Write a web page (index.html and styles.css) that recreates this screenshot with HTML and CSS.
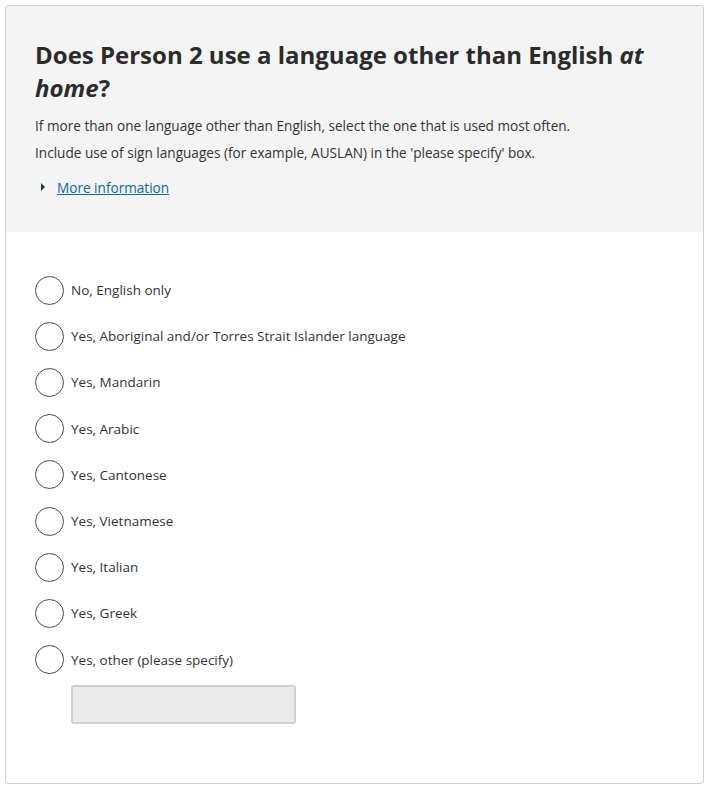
FILE: index.html
```html
<!DOCTYPE html>
<html>
<head>
<meta charset="utf-8">
<link rel="stylesheet" href="styles.css">
</head>
<body>
<div class="card">
  <div class="header">
    <h1 class="title">Does Person 2 use a language other than English <em>at home</em>?</h1>
    <p class="hint">If more than one language other than English, select the one that is used most often.</p>
    <p class="hint">Include use of sign languages (for example, AUSLAN) in the 'please specify' box.</p>
    <div class="more"><span class="tri"></span><a href="#" class="link">More information</a></div>
  </div>
  <div class="options">
    <label class="opt"><span class="radio"></span><span class="lbl">No, English only</span></label>
    <label class="opt"><span class="radio"></span><span class="lbl">Yes, Aboriginal and/or Torres Strait Islander language</span></label>
    <label class="opt"><span class="radio"></span><span class="lbl">Yes, Mandarin</span></label>
    <label class="opt"><span class="radio"></span><span class="lbl">Yes, Arabic</span></label>
    <label class="opt"><span class="radio"></span><span class="lbl">Yes, Cantonese</span></label>
    <label class="opt"><span class="radio"></span><span class="lbl">Yes, Vietnamese</span></label>
    <label class="opt"><span class="radio"></span><span class="lbl">Yes, Italian</span></label>
    <label class="opt"><span class="radio"></span><span class="lbl">Yes, Greek</span></label>
    <label class="opt"><span class="radio"></span><span class="lbl">Yes, other (please specify)</span></label>
    <div class="specify"><div class="input"></div></div>
  </div>
</div>
</body>
</html>
```
FILE: styles.css
```css
* { box-sizing: border-box; }
body {
  margin: 0;
  padding: 5px 5px 0 5px;
  background: #fff;
  font-family: "Open Sans", "Noto Sans", sans-serif;
  color: #333;
}
.card {
  width: 699px;
  height: 779px;
  border: 1px solid #cfcfcf;
  border-radius: 3px;
  overflow: hidden;
}
.header {
  background: #f4f4f4;
  height: 226px;
  padding: 32px 30px 0 29px;
}
.title {
  margin: 0 0 8px 0;
  font-size: 24px;
  line-height: 33px;
  font-weight: 700;
  color: #2b2b2b;
}
.title em { font-style: italic; }
.hint {
  margin: 0;
  font-size: 13.6px;
  line-height: 27px;
  color: #333;
}
.more {
  display: flex;
  align-items: center;
  margin-top: 11px;
  padding-left: 6px;
  height: 20px;
}
.tri {
  width: 0; height: 0;
  border-top: 4px solid transparent;
  border-bottom: 4px solid transparent;
  border-left: 4px solid #1d3b4a;
  margin-right: 12px;
}
.link {
  font-size: 13.6px;
  color: #0b6a99;
  text-decoration: underline;
}
.options {
  padding: 35px 0 0 29px;
}
.opt {
  display: flex;
  align-items: center;
  height: 46.2px;
}
.radio {
  width: 29px; height: 29px;
  border: 1px solid #4a4a4a;
  border-radius: 50%;
  background: #fff;
  margin-right: 7px;
  flex: none;
}
.lbl {
  font-size: 13.5px;
  color: #333;
}
.specify {
  padding: 2px 0 0 36px;
}
.input {
  width: 225px;
  height: 39px;
  background: #eaeaea;
  border: 2px solid #d0d0d0;
  border-radius: 3px;
}
```
